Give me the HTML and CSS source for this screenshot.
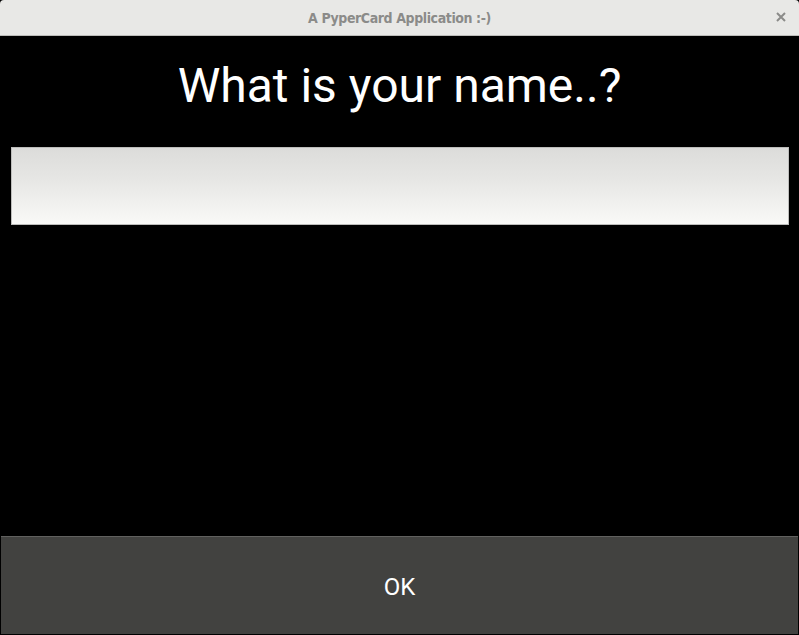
FILE: index.html
```html
<!DOCTYPE html>
<html>
<head>
<meta charset="utf-8">
<link rel="stylesheet" href="styles.css">
</head>
<body>
<div class="window">
  <header class="titlebar">
    <span class="title">A PyperCard Application :-)</span>
    <svg class="close" width="10" height="10" viewBox="0 0 10 10"><path d="M1 1L9 9M9 1L1 9" stroke="#8b8b89" stroke-width="2" fill="none"/></svg>
  </header>
  <main class="card">
    <h1 class="question">What is your name..?</h1>
    <input class="answer" type="text">
    <div class="spacer"></div>
    <button class="ok">OK</button>
  </main>
</div>
</body>
</html>
```
FILE: styles.css
```css
html, body {
  margin: 0;
  padding: 0;
  width: 799px;
  height: 635px;
  overflow: hidden;
  background: #000;
}
.window {
  display: flex;
  flex-direction: column;
  width: 799px;
  height: 635px;
}
.titlebar {
  position: relative;
  height: 35px;
  flex: 0 0 35px;
  background: #e8e8e6;
  border-bottom: 1px solid #bcbcb9;
  border-radius: 4px 4px 0 0;
  display: flex;
  align-items: center;
  justify-content: center;
}
.title {
  font-family: "DejaVu Sans Condensed", "DejaVu Sans", sans-serif;
  font-weight: bold;
  font-size: 14px;
  letter-spacing: -0.4px;
  color: #8b8b89;
}
.close {
  position: absolute;
  right: 13px;
  top: 12px;
}
.card {
  flex: 1;
  display: flex;
  flex-direction: column;
  background: #000;
}
.question {
  margin: 0;
  padding-top: 22px;
  height: 89px;
  box-sizing: border-box;
  text-align: center;
  font-family: Roboto, "Open Sans", sans-serif;
  font-weight: normal;
  font-size: 48px;
  line-height: 56px;
  color: #fff;
}
.answer {
  margin: 22px 10px 0 11px;
  height: 78px;
  box-sizing: border-box;
  border: 1px solid #bdbdbb;
  background: linear-gradient(to bottom, #dcdcda 0%, #e6e6e4 40%, #f9f9f7 100%);
  outline: none;
}
.spacer {
  flex: 1;
}
.ok {
  margin: 0 1px 1px 1px;
  height: 98px;
  box-sizing: border-box;
  background: #424240;
  border: none;
  border-top: 1px solid #61615f;
  color: #fff;
  font-family: Roboto, "Open Sans", sans-serif;
  font-size: 24px;
  padding: 3px 0 0 0;
}
```
